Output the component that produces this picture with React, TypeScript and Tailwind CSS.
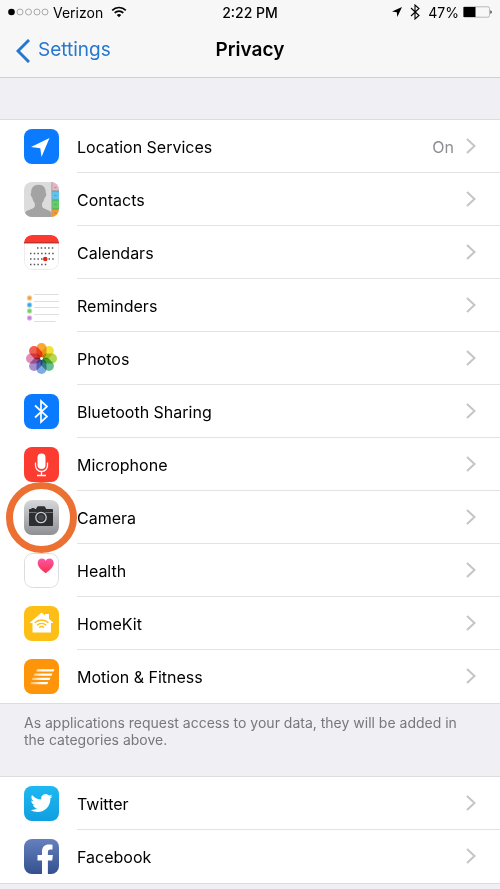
import type { ReactNode } from 'react'
import clsx from 'clsx'

type Item = {
  id: string
  label: string
  icon: ReactNode
  value?: string
  highlighted?: boolean
}

const petals = [
  { angle: 0, color: '#f79a1c' },
  { angle: 45, color: '#f0dc1e' },
  { angle: 90, color: '#a9d33c' },
  { angle: 135, color: '#4fb486' },
  { angle: 180, color: '#6a9fe0' },
  { angle: 225, color: '#9c7fc4' },
  { angle: 270, color: '#dc7fae' },
  { angle: 315, color: '#f0493c' },
]

const calendarDots = [
  { y: 13, from: 13, to: 29 },
  { y: 18.5, from: 6, to: 29 },
  { y: 24, from: 6, to: 29 },
  { y: 29.5, from: 6, to: 22 },
]

const reminderDots = [
  { y: 10, color: '#f2a33c' },
  { y: 17, color: '#3ba6e8' },
  { y: 23, color: '#74cf63' },
  { y: 30, color: '#c77fdb' },
]

function Tile({ children }: { children: ReactNode }) {
  return (
    <svg viewBox="0 0 35 35" className="size-[35px] shrink-0 rounded-lg" fill="none" aria-hidden="true">
      {children}
    </svg>
  )
}

function LocationIcon() {
  return (
    <Tile>
      <rect width="35" height="35" fill="#0a7aff" />
      <path d="M25.5 9 7 18l9.3 1.2L17.5 28Z" fill="#fff" />
    </Tile>
  )
}

function ContactsIcon() {
  return (
    <Tile>
      <rect width="35" height="35" fill="#dcdcdc" />
      <rect x="28" width="7" height="9" fill="#e3b6c6" />
      <rect x="28" y="9" width="7" height="9" fill="#5fc3ee" />
      <rect x="28" y="18" width="7" height="9" fill="#5fcf62" />
      <rect x="28" y="27" width="7" height="8" fill="#f59a2b" />
      <path d="M28 9h7M28 18h7M28 27h7" stroke="#4d8c7c" strokeWidth=".7" />
      <path d="M30.5 5.5h2M30.5 13.5h2M30.5 22.5h2M30.5 31h2" stroke="#667" strokeOpacity=".5" />
      <path d="M27.8 0v35" stroke="#999" strokeWidth=".8" />
      <path
        d="M14.5 2.8c-5 0-7.6 3.3-7.3 8-.9.3-.7 2 .1 3.7.3.8.7 1.1 1 1.2.4 2.3 1.3 4 2.5 5.3v3.5c-.5 2.5-7.200 3-9.800 5.900V35h26.500v-4.600c-2.500-2.900-8.900-3.400-9.400-5.900V21c1.200-1.300 2-3 2.500-5.300.5-.1.8-.5 1.100-1.200.8-1.700.9-3.400 0-3.700.3-4.700-2.200-8-7.200-8Z"
        fill="#a3a3a3"
      />
    </Tile>
  )
}

function CalendarIcon() {
  return (
    <Tile>
      <rect x=".5" y=".5" width="34" height="34" rx="8" fill="#fff" stroke="#ececec" />
      <path d="M0 8.5V8a8 8 0 0 1 8-8h19a8 8 0 0 1 8 8v.5Z" fill="#fa3a30" />
      <path d="M0 7.500h35" stroke="#c4302a" />
      {calendarDots.map(row => (
        <path
          key={row.y}
          d={`M${row.from} ${row.y}H${row.to + 1}`}
          stroke="#555"
          strokeWidth="1.5"
          strokeDasharray="1.5 2.2"
        />
      ))}
      <circle cx="21.3" cy="24" r="2.3" fill="#e0281f" />
    </Tile>
  )
}

function RemindersIcon() {
  return (
    <Tile>
      <path d="M10 6.5h25M10 13.500h25M10 19.500h25M10 26.500h25M10 33.500h25" stroke="#dedede" />
      {reminderDots.map(dot => (
        <g key={dot.y}>
          <circle cx="5.5" cy={dot.y} r="2.700" fill={dot.color} fillOpacity=".55" />
          <circle cx="5.5" cy={dot.y} r="1.700" fill={dot.color} />
        </g>
      ))}
    </Tile>
  )
}

function PhotosIcon() {
  return (
    <Tile>
      {petals.map(p => (
        <rect
          key={p.angle}
          x="12.5"
          y="2"
          width="10"
          height="15"
          rx="5"
          fill={p.color}
          fillOpacity=".88"
          className="mix-blend-multiply"
          transform={`rotate(${p.angle} 17.5 17.5)`}
        />
      ))}
      <circle cx="17.5" cy="17.5" r="1.4" fill="#fff" />
    </Tile>
  )
}

function BluetoothIcon() {
  return (
    <Tile>
      <rect width="35" height="35" fill="#0a7aff" />
      <path d="m11 11.5 12 11-6 5.500V7l6 5.500-12 11" stroke="#fff" strokeWidth="1.7" />
    </Tile>
  )
}

function MicrophoneIcon() {
  return (
    <Tile>
      <rect width="35" height="35" fill="#fc3b31" />
      <rect x="13.5" y="6.5" width="8" height="15.5" rx="4" fill="#fff" />
      <path d="M11.500 15.500v3a6 6 0 0 0 12 0v-3M17.500 24.500v4M13 28.500h9" stroke="#fff" strokeWidth="1.3" />
    </Tile>
  )
}

function CameraIcon() {
  return (
    <Tile>
      <defs>
        <linearGradient id="camera-bg" x1="0" y1="0" x2="0" y2="1">
          <stop stopColor="#d6d7da" />
          <stop offset="1" stopColor="#8f9094" />
        </linearGradient>
      </defs>
      <rect width="35" height="35" fill="url(#camera-bg)" />
      <path
        d="M6 9h1.500V8h3v1h1.500l1.200-2.200c.2-.4.5-.6.9-.6h6c.4 0 .7.2.9.6L22.200 9H28c.6 0 1 .4 1 1v15c0 .6-.4 1-1 1H6c-.6 0-1-.4-1-1V10c0-.6.4-1 1-1Z"
        fill="#2d2e31"
      />
      <path d="M5 12.500h24" stroke="#85868a" strokeWidth=".8" />
      <circle cx="17" cy="17.500" r="6.600" fill="#2d2e31" />
      <circle cx="17" cy="17.500" r="5.200" stroke="#c9cacd" strokeWidth="1.300" />
      <circle cx="17" cy="17.500" r="3" fill="#44464b" />
    </Tile>
  )
}

function HealthIcon() {
  return (
    <Tile>
      <defs>
        <linearGradient id="heart" x1="0" y1="0" x2="0" y2="1">
          <stop stopColor="#fb56a5" />
          <stop offset="1" stopColor="#fb2f4b" />
        </linearGradient>
      </defs>
      <rect x=".5" y=".5" width="34" height="34" rx="8" fill="#fff" stroke="#dcdcdf" />
      <path
        d="M21.700 20.200C16.500 16.500 13.700 13.500 13.700 10c0-2.600 1.900-4.400 4.200-4.400 1.600 0 3 .8 3.800 2.300.8-1.500 2.200-2.300 3.800-2.300 2.300 0 4.200 1.800 4.200 4.400 0 3.500-2.800 6.500-8 10.200Z"
        fill="url(#heart)"
      />
    </Tile>
  )
}

function HomeKitIcon() {
  return (
    <Tile>
      <rect width="35" height="35" fill="#fdbf16" />
      <path d="M17.500 6.500 21 9.500V8h4v4.800l4.500 4.200H27v9.500H8.500V17H5.500Z" fill="#fff" />
      <path
        d="M10.800 16.800a9.500 9.500 0 0 1 13.600 0M13 19.300a6.500 6.500 0 0 1 9.200 0M15.200 21.600a3.500 3.500 0 0 1 4.800 0"
        stroke="#fdbf16"
        strokeWidth="1.400"
      />
    </Tile>
  )
}

function MotionIcon() {
  return (
    <Tile>
      <defs>
        <linearGradient id="streak" x1="0" y1="0" x2="1" y2="0">
          <stop stopColor="#fff" stopOpacity=".35" />
          <stop offset=".5" stopColor="#fff" />
        </linearGradient>
      </defs>
      <rect width="35" height="35" fill="#fd9409" />
      <path
        d="M13 10.300h17.500l-1 2.300H12.300ZM10.500 14.500h18l-1 2.300H9.800ZM8.500 18.700h18l-1 2.300H7.800ZM7 22.900h17.300l-1 2.300H6.300Z"
        fill="url(#streak)"
      />
    </Tile>
  )
}

function TwitterIcon() {
  return (
    <Tile>
      <defs>
        <linearGradient id="twitter-bg" x1="0" y1="0" x2="0" y2="1">
          <stop stopColor="#1eb8f2" />
          <stop offset="1" stopColor="#109fe0" />
        </linearGradient>
      </defs>
      <rect width="35" height="35" fill="url(#twitter-bg)" />
      <path
        transform="translate(6.5 6) scale(.92)"
        d="M23.953 4.570a10 10 0 0 1-2.825.775 4.958 4.958 0 0 0 2.163-2.723c-.951.555-2.005.959-3.127 1.184a4.920 4.920 0 0 0-8.384 4.482C7.690 8.095 4.067 6.130 1.640 3.162a4.822 4.822 0 0 0-.666 2.475c0 1.710.87 3.213 2.188 4.096a4.904 4.904 0 0 1-2.228-.616v.06a4.923 4.923 0 0 0 3.946 4.827 4.996 4.996 0 0 1-2.212.085 4.936 4.936 0 0 0 4.604 3.417 9.867 9.867 0 0 1-6.102 2.105c-.39 0-.779-.023-1.170-.067a13.995 13.995 0 0 0 7.557 2.209c9.053 0 13.998-7.496 13.998-13.985 0-.21 0-.42-.015-.63A9.935 9.935 0 0 0 24 4.590z"
        fill="#fff"
      />
    </Tile>
  )
}

function FacebookIcon() {
  return (
    <Tile>
      <defs>
        <linearGradient id="facebook-bg" x1="0" y1="0" x2="0" y2="1">
          <stop stopColor="#6580bf" />
          <stop offset="1" stopColor="#33508f" />
        </linearGradient>
      </defs>
      <rect width="35" height="35" fill="url(#facebook-bg)" />
      <path
        d="M18 35V21.500h-4.500V16H18v-3.500c0-4.500 2.700-7 6.800-7 1.600 0 2.900.1 3.700.2V10.500h-2.100c-2 0-2.500 1-2.500 2.500v3h5l-.7 5.500h-4.300V35Z"
        fill="#fff"
      />
    </Tile>
  )
}

const dataItems: Item[] = [
  { id: 'location', label: 'Location Services', icon: <LocationIcon />, value: 'On' },
  { id: 'contacts', label: 'Contacts', icon: <ContactsIcon /> },
  { id: 'calendars', label: 'Calendars', icon: <CalendarIcon /> },
  { id: 'reminders', label: 'Reminders', icon: <RemindersIcon /> },
  { id: 'photos', label: 'Photos', icon: <PhotosIcon /> },
  { id: 'bluetooth', label: 'Bluetooth Sharing', icon: <BluetoothIcon /> },
  { id: 'microphone', label: 'Microphone', icon: <MicrophoneIcon /> },
  { id: 'camera', label: 'Camera', icon: <CameraIcon />, highlighted: true },
  { id: 'health', label: 'Health', icon: <HealthIcon /> },
  { id: 'homekit', label: 'HomeKit', icon: <HomeKitIcon /> },
  { id: 'motion', label: 'Motion & Fitness', icon: <MotionIcon /> },
]

const socialItems: Item[] = [
  { id: 'twitter', label: 'Twitter', icon: <TwitterIcon /> },
  { id: 'facebook', label: 'Facebook', icon: <FacebookIcon /> },
]

function StatusBar() {
  return (
    <div className="grid h-6 grid-cols-[1fr_auto_1fr] items-center px-2 text-[14px]">
      <div className="flex items-center gap-1">
        <svg viewBox="0 0 41 8" className="h-2 w-[41px]" fill="none" aria-hidden="true">
          <circle cx="3.5" cy="4" r="3.3" fill="#000" />
          {[12, 20.5, 29, 37].map(cx => (
            <circle key={cx} cx={cx} cy="4" r="3" stroke="#888" strokeWidth=".7" />
          ))}
        </svg>
        <span>Verizon</span>
        <svg viewBox="0 0 16 12" className="ml-1 h-3 w-4" fill="none" stroke="#000" strokeWidth="1.7" aria-hidden="true">
          <path d="M1.200 4.300a9.700 9.700 0 0 1 13.600 0M3.700 6.900a6.100 6.100 0 0 1 8.600 0" />
          <path d="M8 11.300 5.800 9.100a3.100 3.100 0 0 1 4.400 0Z" fill="#000" stroke="none" />
        </svg>
      </div>
      <span className="font-medium">2:22 PM</span>
      <div className="flex items-center justify-end gap-1">
        <svg viewBox="0 0 10 10" className="size-[10px]" aria-hidden="true">
          <path d="M10 0 0 4.600l4.800.7L5.300 10Z" />
        </svg>
        <svg viewBox="0 0 10 16" className="ml-1 h-4 w-[10px]" fill="none" stroke="#000" strokeWidth="1.100" aria-hidden="true">
          <path d="m1 4 8 7.500-4 3.500V1l4 3.500L1 12" />
        </svg>
        <span className="ml-1">47%</span>
        <svg viewBox="0 0 29 12" className="h-3 w-[29px]" fill="none" aria-hidden="true">
          <rect x=".5" y=".8" width="26" height="10.4" rx="1.5" stroke="#aaa" strokeWidth=".8" />
          <rect x=".5" y="1" width="12" height="10" fill="#000" />
          <path d="M27.500 4.200c1.500.4 1.500 3.200 0 3.600Z" fill="#000" />
        </svg>
      </div>
    </div>
  )
}

function SettingsRow({ item }: { item: Item }) {
  return (
    <li className="group">
      <a href={`#${item.id}`} className="flex h-[53px] items-center pl-6">
        <span className="relative shrink-0">
          {item.icon}
          {item.highlighted && (
            <span className="absolute -inset-[18px] z-10 rounded-full border-[7px] border-[#ec7032]" />
          )}
        </span>
        <span
          className={clsx(
            'ml-[18px] flex h-full flex-1 items-center pr-6',
            'border-b border-[#e3e3e6] group-last:border-transparent'
          )}
        >
          <span className="flex-1 pt-[2px]">{item.label}</span>
          {item.value && <span className="mr-3 pt-[2px] text-[#8e8e93]">{item.value}</span>}
          <svg viewBox="0 0 10 16" className="h-4 w-[10px]" fill="none" stroke="#c4c4c9" strokeWidth="2" aria-hidden="true">
            <path d="m1 1 7.500 7L1 15" />
          </svg>
        </span>
      </a>
    </li>
  )
}

function SettingsGroup({ items }: { items: Item[] }) {
  return (
    <ul className="border-y border-[#dddde1] bg-white">
      {items.map(item => (
        <SettingsRow key={item.id} item={item} />
      ))}
    </ul>
  )
}

export default function App() {
  return (
    <div className="min-h-screen bg-[#efeff4] font-['Inter','Liberation_Sans',sans-serif] text-[16px] text-black">
      <header className="border-b border-[#cfcfd6] bg-[#f7f7f8]">
        <StatusBar />
        <nav className="grid h-[53px] grid-cols-[1fr_auto_1fr] items-center px-4 text-[19px]">
          <a href="#settings" className="flex items-center gap-2 text-[#2678cf]">
            <svg viewBox="0 0 14 24" className="h-6 w-[14px]" fill="none" stroke="currentColor" strokeWidth="3" aria-hidden="true">
              <path d="M13 1 2 12l11 11" />
            </svg>
            Settings
          </a>
          <h1 className="font-semibold">Privacy</h1>
        </nav>
      </header>

      <main className="pt-[41px]">
        <SettingsGroup items={dataItems} />
        <p className="px-6 pt-[10px] pb-7 text-[14px] leading-[17px] text-[#77777c]">
          As applications request access to your data, they will be added in the categories above.
        </p>
        <SettingsGroup items={socialItems} />
      </main>
    </div>
  )
}
